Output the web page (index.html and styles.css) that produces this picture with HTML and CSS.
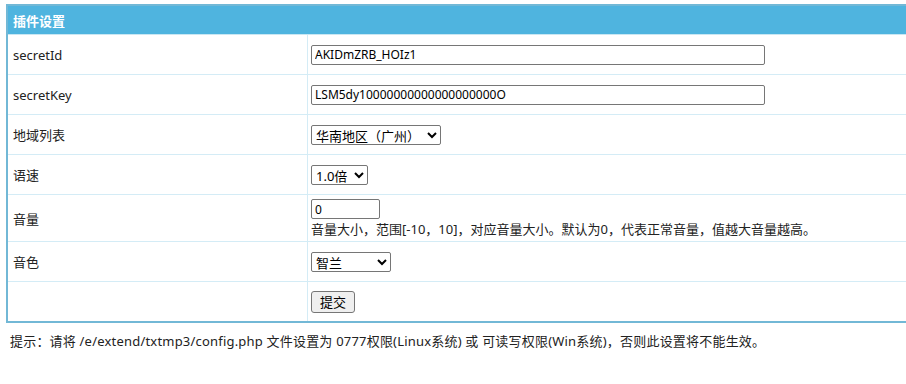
FILE: index.html
```html
<!DOCTYPE html>
<html lang="zh-CN">
<head>
    <meta charset="UTF-8">
    <meta name="viewport" content="width=device-width, initial-scale=1.0">
    <title>插件设置</title>
    <link rel="stylesheet" href="styles.css">
</head>
<body>
    <div class="wrap">
        <form class="setting-form" onsubmit="return false;">
            <table class="setting-table">
                <tr>
                    <th colspan="2">插件设置</th>
                </tr>
                <tr>
                    <td class="label">secretId</td>
                    <td><input type="text" class="text-long" value="AKIDmZRB_HOIz1"></td>
                </tr>
                <tr>
                    <td class="label">secretKey</td>
                    <td><input type="text" class="text-long" value="LSM5dy10000000000000000000O"></td>
                </tr>
                <tr>
                    <td class="label">地域列表</td>
                    <td>
                        <select class="sel-region">
                            <option>华南地区（广州）</option>
                        </select>
                    </td>
                </tr>
                <tr>
                    <td class="label">语速</td>
                    <td>
                        <select class="sel-speed">
                            <option>1.0倍</option>
                        </select>
                    </td>
                </tr>
                <tr>
                    <td class="label">音量</td>
                    <td class="volume">
                        <input type="text" class="text-short" value="0"><br>
                        音量大小，范围[-10，10]，对应音量大小。默认为0，代表正常音量，值越大音量越高。
                    </td>
                </tr>
                <tr>
                    <td class="label">音色</td>
                    <td>
                        <select class="sel-voice">
                            <option>智兰</option>
                        </select>
                    </td>
                </tr>
                <tr>
                    <td class="label"></td>
                    <td><button type="submit">提交</button></td>
                </tr>
            </table>
        </form>
        <p class="tip">提示：请将 /e/extend/txtmp3/config.php 文件设置为 0777权限(Linux系统) 或 可读写权限(Win系统)，否则此设置将不能生效。</p>
    </div>
</body>
</html>
```

FILE: styles.css
```css
body {
    margin: 0;
    padding: 0;
    font-family: "Noto Sans", "Noto Sans CJK SC", sans-serif;
    font-size: 13px;
    color: #222;
    background-color: #fff;
}
.wrap {
    padding: 4px 0 0 6px;
    overflow: hidden;
}
.setting-table {
    width: 940px;
    border-collapse: collapse;
    border: 2px solid #72b8d6;
}
.setting-table th {
    height: 28px;
    padding: 0 5px;
    background-color: #4fb4df;
    color: #fff;
    font-weight: bold;
    text-align: left;
    border-bottom: 1px solid #c9e7f3;
}
.setting-table td {
    height: 39px;
    padding: 0 3px;
    border: 1px solid #d4ecf6;
    vertical-align: middle;
}
.setting-table td.label {
    width: 291px;
    padding-left: 5px;
}
.setting-table td.volume {
    height: 45px;
    line-height: 20px;
    padding-top: 1px;
}
input[type="text"] {
    height: 20px;
    padding: 0 3px;
    border: 1px solid #767676;
    border-radius: 2px;
    font-family: inherit;
    font-size: 12px;
    color: #000;
    box-sizing: border-box;
}
.text-long {
    width: 454px;
    height: 22px;
}
.text-short {
    width: 69px;
    height: 22px;
    vertical-align: middle;
}
select {
    height: 20px;
    border: 1px solid #767676;
    border-radius: 2px;
    font-family: inherit;
    font-size: 13px;
    color: #000;
    background-color: #fff;
}
.sel-region {
    width: 130px;
}
.sel-speed {
    width: 57px;
}
.sel-voice {
    width: 80px;
}
button {
    height: 22px;
    padding: 0 8px;
    border: 1px solid #767676;
    border-radius: 3px;
    background-color: #efefef;
    font-family: inherit;
    font-size: 13px;
    color: #000;
}
.tip {
    margin: 8px 0 0 4px;
    font-size: 13px;
    letter-spacing: 0.2px;
    color: #222;
}
```
